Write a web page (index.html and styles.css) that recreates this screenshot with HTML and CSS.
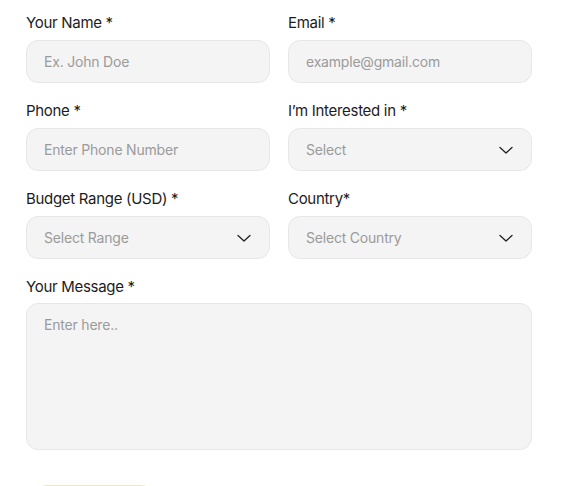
FILE: index.html
```html
<!DOCTYPE html>
<html lang="en">
<head>
<meta charset="utf-8">
<title>Contact Form</title>
<link rel="stylesheet" href="styles.css">
</head>
<body>
<form class="form">
  <div class="grid">
    <div class="field">
      <label class="label">Your Name *</label>
      <div class="input"><span class="ph">Ex. John Doe</span></div>
    </div>
    <div class="field">
      <label class="label">Email *</label>
      <div class="input"><span class="ph">example@gmail.com</span></div>
    </div>
    <div class="field">
      <label class="label">Phone *</label>
      <div class="input"><span class="ph">Enter Phone Number</span></div>
    </div>
    <div class="field">
      <label class="label">I’m Interested in *</label>
      <div class="input select"><span class="ph">Select</span>
        <svg class="chev" width="16" height="16" viewBox="0 0 16 16"><path d="M2 5.5 L8 11 L14 5.5" fill="none" stroke="#222" stroke-width="1.3" stroke-linecap="round" stroke-linejoin="round"/></svg>
      </div>
    </div>
    <div class="field">
      <label class="label">Budget Range (USD) *</label>
      <div class="input select"><span class="ph">Select Range</span>
        <svg class="chev" width="16" height="16" viewBox="0 0 16 16"><path d="M2 5.5 L8 11 L14 5.5" fill="none" stroke="#222" stroke-width="1.3" stroke-linecap="round" stroke-linejoin="round"/></svg>
      </div>
    </div>
    <div class="field">
      <label class="label">Country*</label>
      <div class="input select"><span class="ph">Select Country</span>
        <svg class="chev" width="16" height="16" viewBox="0 0 16 16"><path d="M2 5.5 L8 11 L14 5.5" fill="none" stroke="#222" stroke-width="1.3" stroke-linecap="round" stroke-linejoin="round"/></svg>
      </div>
    </div>
    <div class="field full">
      <label class="label">Your Message *</label>
      <div class="textarea"><span class="ph">Enter here..</span></div>
    </div>
  </div>
  <button type="button" class="submit" aria-label="Submit"></button>
</form>
</body>
</html>
```
FILE: styles.css
```css
html, body {
  margin: 0;
  padding: 0;
  background: #ffffff;
}
body {
  font-family: "Inter", "Liberation Sans", sans-serif;
  color: #1c1c1c;
}
.form {
  width: 506px;
  padding: 12px 0 0 26px;
}
.grid {
  display: grid;
  grid-template-columns: 1fr 1fr;
  column-gap: 18px;
  row-gap: 17px;
}
.field {
  display: flex;
  flex-direction: column;
  gap: 7px;
}
.full {
  grid-column: 1 / span 2;
}
.label {
  font-size: 15px;
  line-height: 21px;
  letter-spacing: -0.3px;
  color: #1c1c1c;
}
.input {
  box-sizing: border-box;
  height: 43px;
  background: #f4f4f4;
  border: 1px solid #e7e7e7;
  border-radius: 12px;
  padding: 0 17px 0 17px;
  display: flex;
  align-items: center;
  justify-content: space-between;
}
.ph {
  font-size: 14px;
  letter-spacing: -0.2px;
  color: #9b9b9b;
}
.chev {
  display: block;
}
.textarea {
  box-sizing: border-box;
  height: 147px;
  margin-top: -1px;
  background: #f4f4f4;
  border: 1px solid #e7e7e7;
  border-radius: 12px;
  padding: 10px 17px;
}
.submit {
  display: block;
  margin-top: 35px;
  width: 136px;
  height: 44px;
  border: 1px solid #f1ee9a;
  border-radius: 22px;
  background: #f0ec6a;
  padding: 0;
}
```
